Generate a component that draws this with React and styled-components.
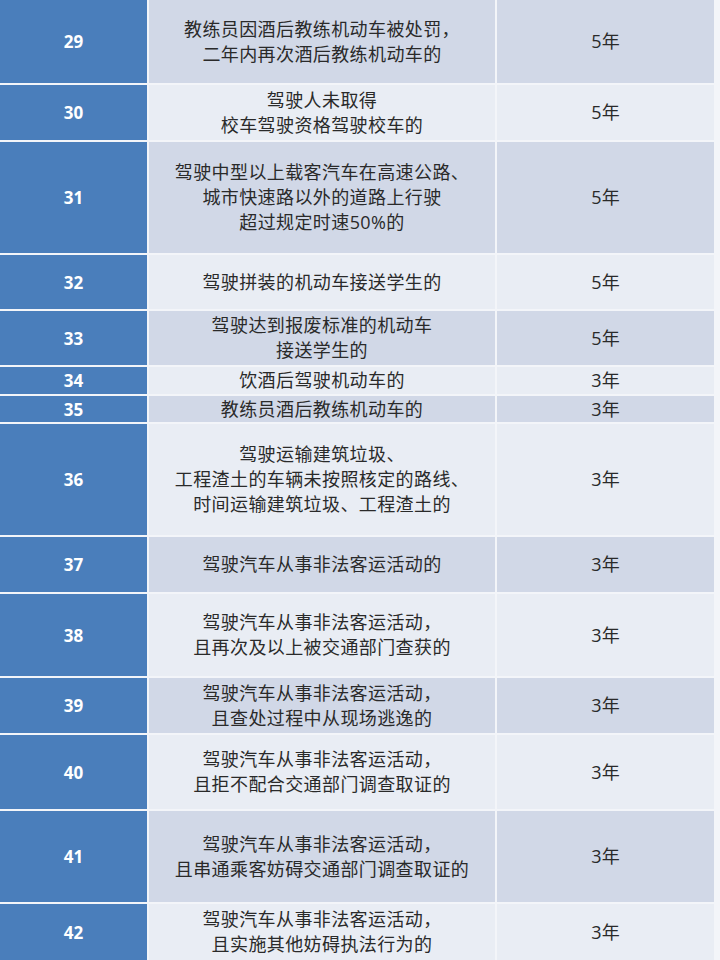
import React from 'react'
import styled, { createGlobalStyle } from 'styled-components';

const GlobalStyle = createGlobalStyle`
  html, body {
    margin: 0;
    padding: 0;
    background: #f3f5f9;
  }
  body {
    width: 720px;
    height: 960px;
    overflow: hidden;
  }
`;

const rows = [
  { no: 29, h: 83, text: ['教练员因酒后教练机动车被处罚，', '二年内再次酒后教练机动车的'], years: '5年' },
  { no: 30, h: 55, text: ['驾驶人未取得', '校车驾驶资格驾驶校车的'], years: '5年' },
  { no: 31, h: 111, text: ['驾驶中型以上载客汽车在高速公路、', '城市快速路以外的道路上行驶', '超过规定时速50%的'], years: '5年' },
  { no: 32, h: 54, text: ['驾驶拼装的机动车接送学生的'], years: '5年' },
  { no: 33, h: 54, text: ['驾驶达到报废标准的机动车', '接送学生的'], years: '5年' },
  { no: 34, h: 27, text: ['饮酒后驾驶机动车的'], years: '3年' },
  { no: 35, h: 26, text: ['教练员酒后教练机动车的'], years: '3年' },
  { no: 36, h: 111, text: ['驾驶运输建筑垃圾、', '工程渣土的车辆未按照核定的路线、', '时间运输建筑垃圾、工程渣土的'], years: '3年' },
  { no: 37, h: 55, text: ['驾驶汽车从事非法客运活动的'], years: '3年' },
  { no: 38, h: 82, text: ['驾驶汽车从事非法客运活动，', '且再次及以上被交通部门查获的'], years: '3年' },
  { no: 39, h: 55, text: ['驾驶汽车从事非法客运活动，', '且查处过程中从现场逃逸的'], years: '3年' },
  { no: 40, h: 74, text: ['驾驶汽车从事非法客运活动，', '且拒不配合交通部门调查取证的'], years: '3年' },
  { no: 41, h: 91, text: ['驾驶汽车从事非法客运活动，', '且串通乘客妨碍交通部门调查取证的'], years: '3年' },
  { no: 42, h: 56, text: ['驾驶汽车从事非法客运活动，', '且实施其他妨碍执法行为的'], years: '3年' },
];

const App = () => {
  return (
    <>
      <GlobalStyle />
      <Table>
        {rows.map((row, i) => (
          <Row key={row.no} $h={row.h}>
            <NumCell>{row.no}</NumCell>
            <TextCell $dark={i % 2 === 0}>
              <Lines>
                {row.text.map((line) => (
                  <span key={line}>{line}</span>
                ))}
              </Lines>
            </TextCell>
            <TextCell $dark={i % 2 === 0}>
              <Years>{row.years}</Years>
            </TextCell>
          </Row>
        ))}
      </Table>
    </>
  )
}

export default App

const Table = styled.div`
  display: flex;
  flex-direction: column;
  gap: 2px;
  width: 720px;
  padding-right: 6px;
  box-sizing: border-box;
  background: #f3f5f9;
`;

const Row = styled.div`
  display: grid;
  grid-template-columns: 147px 346px 1fr;
  gap: 2px;
  height: ${(p) => p.$h}px;
  flex-shrink: 0;
`;

const NumCell = styled.div`
  background: #4a7ebb;
  display: flex;
  align-items: center;
  justify-content: center;
  color: #ffffff;
  font-family: 'Open Sans', 'Liberation Sans', sans-serif;
  font-weight: 700;
  font-size: 17px;
`;

const TextCell = styled.div`
  background: ${(p) => (p.$dark ? '#d1d8e7' : '#e9edf4')};
  display: flex;
  align-items: center;
  justify-content: center;
  color: #2a2a2a;
  overflow: hidden;
`;

const Lines = styled.div`
  display: flex;
  flex-direction: column;
  align-items: center;
  font-family: 'Open Sans', 'Noto Sans CJK SC', sans-serif;
  font-size: 18px;
  letter-spacing: 0.4px;
  line-height: 25px;
  white-space: nowrap;
`;

const Years = styled.span`
  font-family: 'Open Sans', 'Noto Sans CJK SC', sans-serif;
  font-size: 18px;
  line-height: 25px;
`;
